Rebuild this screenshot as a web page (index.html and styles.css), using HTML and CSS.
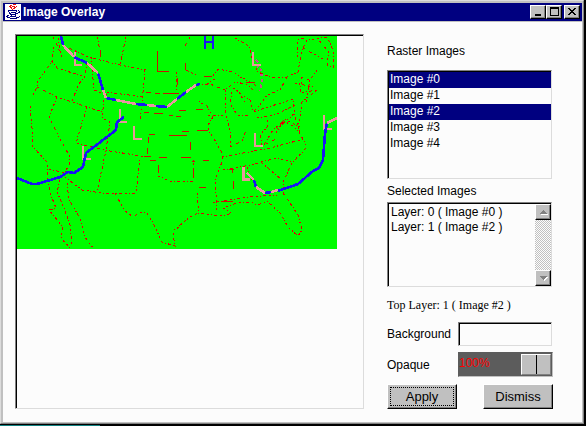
FILE: index.html
```html
<!DOCTYPE html>
<html lang="en">
<head>
<meta charset="utf-8">
<title>Image Overlay</title>
<link rel="stylesheet" href="styles.css">
</head>
<body>
<div class="window">
  <header class="titlebar">
    <svg class="logo" viewBox="0 0 16 16" shape-rendering="crispEdges" aria-hidden="true">
      <rect width="16" height="16" fill="#fff"/>
      <path d="M5 1.5h2M8 .5h3M4 2.5h2M7 2.5h3M11 2.5h1M5 3.5h2M9 3.5h2M6 4.5h1M8 4.5h2M7 5.5h1" stroke="#f01010"/>
      <path d="M3 6.5h9M13 6.5h1M3 7.5h1M11 7.5h1M14 7.5h1M4 8.5h1M6 8.5h5M13 8.5h2M4 9.5h2M10 9.5h3M5 10.5h6M2 11.5h2M6 11.5h1M10 11.5h1M1 12.5h2M5 12.5h6M14 12.5h1M2 13.5h3M11 13.5h3M5 14.5h7" stroke="#000080"/>
    </svg>
    <h1 class="title">Image Overlay</h1>
    <div class="controls">
      <button class="control" type="button" aria-label="Minimize"><svg viewBox="0 0 12 12" shape-rendering="crispEdges"><path d="M3 9h6" stroke="#000" stroke-width="2"/></svg></button>
      <button class="control" type="button" aria-label="Maximize"><svg viewBox="0 0 12 12" shape-rendering="crispEdges"><path d="M2 2h9M2.5 1v9M10.5 1v9M2 9.5h9" stroke="#000" fill="none"/><path d="M2 2h9" stroke="#000" stroke-width="2"/></svg></button>
      <button class="control control-close" type="button" aria-label="Close"><svg viewBox="0 0 12 12" shape-rendering="crispEdges"><path d="M2 2.5h2M8 2.5h2M3 3.5h2M7 3.5h2M4 4.5h4M5 5.5h2M4 6.5h4M3 7.5h2M7 7.5h2M2 8.5h2M8 8.5h2" stroke="#000"/></svg></button>
    </div>
  </header>
  <main class="content">
    <section class="canvas" aria-label="Overlay preview">
      <svg class="map" viewBox="17 36 320 213" shape-rendering="crispEdges" role="img" aria-label="Weather map">
        <rect x="17" y="36" width="320" height="213" fill="#00fc00"/>
        <g class="borders">
          <path d="M53 37L57 45L62 57M58 38L61 55M54 47L52 61L38 81L37 87L33 95"/>
          <path d="M30 106L31 117L32 128L33 147L47 162L47 180"/>
          <path d="M63 45L88 57L120 65L146 70"/>
          <path d="M52 61L57 68L82 76M87 63L84 78L78 85L72 102"/>
          <path d="M37 87L57 97L87 107L103 112M57 97L49 117L60 139L69 155L70 163L65 172"/>
          <path d="M87 107L76 143L104 150L147 157"/>
          <path d="M91 57L94 90L107 95M107 92L143 97M104 100L102 118L110 122L106 150L97 192"/>
          <path d="M145 70L143 92L140 120M97 37L100 50M126 37L120 65M176 72L177 90"/>
          <path d="M49 169L65 173M48 180L50 193L56 208L49 210L63 227L61 238L70 248"/>
          <path d="M60 180L57 192L64 208L70 225L72 245L75 248M67 183L69 200L80 218L85 237L93 248"/>
          <path d="M65 177L82 190L102 193L136 193L140 158M115 193L124 210L133 217L140 212L147 213L153 223L162 242L175 246L173 233L180 226"/>
          <path d="M158 176L170 181L193 181L193 160M197 193L199 212"/>
          <path d="M174 230L190 217L198 213L222 216L232 213L223 208L237 203L250 202L258 205L267 201L280 213L288 227L298 236L302 230L298 215L290 203L283 193L283 182L292 163L307 147L298 130"/>
          <path d="M217 210L215 180L222 162L223 155L216 142L208 130L208 125L213 117L207 106L198 101"/>
          <path d="M223 170L250 165L277 158L293 162M222 157L270 148L300 140M247 167L252 180M262 163L282 180M217 202L250 197L277 195"/>
          <path d="M190 37L184 48M185 63L186 70L198 76M213 76L218 69L233 72L242 78"/>
          <path d="M198 85L210 84L225 90L235 82L246 84L253 90M225 90L225 113L230 130L230 147"/>
          <path d="M232 92L230 103L237 115L250 115M233 88L250 100L253 110M237 90L245 102M223 115L208 116"/>
          <path d="M235 38L249 46L253 62L258 72L270 77L287 77L298 72L302 50L307 40L327 37L333 50L333 67L327 65L329 52L317 38M303 48L323 59"/>
          <path d="M317 70L310 80L302 77L300 93L317 90L302 102L298 130M297 57L298 40L307 37M295 83L313 87M310 80L306 102"/>
          <path d="M287 77L280 90L267 95L260 105L253 112L293 99L295 117L300 133L293 126L284 121L273 130L264 145L278 138"/>
          <path d="M257 118L277 114L295 105M262 145L260 135L268 126L267 119M277 129L296 112M276 133L284 119L300 127"/>
          <path d="M230 147L242 141L246 130M207 84L218 77M243 78L258 87"/>
        </g>
        <g class="state-lines">
          <path d="M157.5 51V71.5H169M100.5 50V57M146 92.5H151M155 93.5H160M163 93.5H170M144 112.5H149M154 113.5H163M169 115.5H173M176 116.5H181M149 134.5H155M148.5 137V143M147.5 148V154M144 156.5H151M150 160.5H156M159 157.5H167M158.5 165V173M169 135.5H187M170 93.5H179M177.5 78V85M179 110.5H186M196 109.5H203M197 130.5H208M182 131.5H189M190.5 142V150M181 157.5H191M203 160.5H209M199 187.5H206M232.5 169V173M229 169.5H234M233.5 181V189M246 82.5H255M204 76.5H212M185.5 63V70M192 161.5H195M193.5 168V177M213 202.5H215M222 201.5H233"/>
        </g>
        <path d="M256 60L259 63L258 67L261 68L260 74L263 76L260 91" class="shade"/>
        <g class="pressure-low">
          <path d="M75 52V65H82M120 109V122H127M134 126V139H142M83 146V158.500H91M253 52V65H261M255 133V146H263M324 115V129H332"/>
          <path d="M243.5 167V179.5H250" stroke-width="3"/>
        </g>
        <path d="M205 36V49M213 36V49M205 42H213" class="pressure-high"/>
        <g class="front-cold">
          <path d="M61 36L63 45M74 57L87 63M98 73L103 90M106 98L116 100M136 104L147 105M156 106L167 107M177 99L186 92M196 85L200 84"/>
          <path d="M17 178L32 184H37L60 177L68 172L74 173L83 167L86 153L116 130L117 122L124 117"/>
          <path d="M327 123L325 134L323 160L319 168L313 171L298 184L278 191M271 192L265 193M256 187L254 180"/>
        </g>
        <g class="front-warm">
          <path d="M63 45L74 57M87 63L98 73M103 90L106 98M116 100L136 104M147 105L156 106M167 107L177 99M186 92L196 85"/>
          <path d="M337 118L327 123M278 190L271 192M265 193L256 187M254 180L247 173"/>
        </g>
      </svg>
    </section>
    <form class="panel">
      <label class="label" for="raster">Raster Images</label>
      <select class="sunken raster" id="raster" size="6" multiple>
        <option selected>Image #0</option>
        <option>Image #1</option>
        <option selected>Image #2</option>
        <option>Image #3</option>
        <option>Image #4</option>
      </select>
      <label class="label" for="selected">Selected Images</label>
      <div class="sunken layers">
        <textarea class="layers-text" id="selected" readonly>Layer: 0 ( Image #0 )
Layer: 1 ( Image #2 )</textarea>
        <div class="scrollbar">
          <button class="scroll-button" type="button" aria-label="Scroll up"><svg viewBox="0 0 12 12" shape-rendering="crispEdges"><path d="M3 9h8L7 5z" fill="#fff"/><path d="M2 8h8L6 4z" fill="#808080"/></svg></button>
          <button class="scroll-button" type="button" aria-label="Scroll down"><svg viewBox="0 0 12 12" shape-rendering="crispEdges"><path d="M3 5h8L7 9z" fill="#fff"/><path d="M2 4h8L6 8z" fill="#808080"/></svg></button>
        </div>
      </div>
      <p class="top-layer">Top Layer: 1 ( Image #2 )</p>
      <div class="field">
        <label for="background">Background</label>
        <input class="sunken background" id="background" type="text">
      </div>
      <div class="field">
        <label for="opaque">Opaque</label>
        <div class="slider">
          <input class="range" id="opaque" type="range" min="0" max="100" value="100">
          <output class="percent" for="opaque">100%</output>
        </div>
      </div>
      <div class="actions">
        <button class="button button-default" type="button">Apply</button>
        <button class="button" type="button">Dismiss</button>
      </div>
    </form>
  </main>
</div>
</body>
</html>
```
FILE: styles.css
```css
* {
  box-sizing: border-box;
}

body {
  display: flex;
  min-height: 100vh;
  margin: 0;
  padding: 0 2px 2px 0;
  background: linear-gradient(#108080, #108080) left bottom / 100px 1px no-repeat #000;
  color: #000;
  font: 12px/16px "Liberation Sans", sans-serif;
}

button,
input,
select,
textarea {
  margin: 0;
  border-radius: 0;
  color: inherit;
  font: inherit;
}

.window {
  display: flex;
  flex: 1;
  flex-direction: column;
  padding: 1px;
  border: 1px solid;
  border-color: #dcdcdc #808080 #808080 #dcdcdc;
  background: #fcfcfc;
  box-shadow: inset -1px -1px #c0c0c0, inset 2px 2px #c0c0c0;
}

.titlebar {
  display: flex;
  align-items: center;
  height: 19px;
  margin: 1px 0 0 1px;
  padding: 0 2px;
  border-bottom: 1px solid #c0c0c0;
  background: #000080;
  color: #fff;
}

.logo {
  width: 16px;
  height: 16px;
}

.title {
  flex: 1;
  margin: 0 0 0 2px;
  font-size: 12px;
  line-height: 16px;
}

.controls {
  display: flex;
}

.control,
.scroll-button,
.button {
  border: 1px solid;
  border-color: #fff #000 #000 #fff;
  background: #c0c0c0;
  box-shadow: inset -1px -1px #808080;
}

.control {
  width: 16px;
  height: 14px;
  padding: 0 1px;
}

.control-close {
  margin-left: 2px;
}

.control svg,
.scroll-button svg {
  display: block;
  width: 12px;
  height: 12px;
}

.content {
  display: flex;
  flex: 1;
  gap: 23px;
  padding: 12px 29px 13px 13px;
}

.sunken,
.canvas {
  border: 1px solid;
  border-color: #808080 #dcdcdc #dcdcdc #808080;
  outline: 0;
  background: #fcfcfc;
  box-shadow: inset 1px 1px #000;
}

.canvas {
  flex: 1;
  min-width: 0;
  padding: 1px 0 0 1px;
}

.map {
  display: block;
  width: 320px;
  max-width: 100%;
}

.map path {
  fill: none;
}

.borders {
  stroke: #e00000;
  stroke-dasharray: 2 2 1 2 3 3;
}

.state-lines {
  stroke: #c81400;
}

.shade {
  stroke: #c0508c;
  stroke-width: 2;
  stroke-dasharray: 3 3;
}

.pressure-low {
  stroke: #e89898;
  stroke-width: 2;
}

.pressure-high {
  stroke: #1818f0;
  stroke-width: 2;
}

.front-cold {
  stroke: #1818f0;
  stroke-width: 2.6;
}

.front-warm {
  stroke: #e898a0;
  stroke-width: 2.6;
}

.panel {
  display: flex;
  flex-direction: column;
  width: 166px;
  padding-top: 9px;
}

.raster {
  height: 109px;
  margin: 11px 1px 4px 0;
  padding: 1px 0 0 1px;
  overflow: hidden;
}

.raster option {
  min-height: 16px;
  padding: 0 1px;
  line-height: 16px;
}

.raster option:checked {
  background: linear-gradient(#000080, #000080);
  color: #fff;
  -webkit-text-fill-color: #fff;
}

.layers {
  display: flex;
  height: 85px;
  margin: 3px 1px 10px 0;
  padding: 1px 0 0 1px;
}

.layers-text {
  flex: 1;
  min-width: 0;
  padding: 1px 2px;
  border: 0;
  outline: 0;
  overflow: hidden;
  background: transparent;
  line-height: 15px;
  resize: none;
}

.scrollbar {
  display: flex;
  flex-direction: column;
  justify-content: space-between;
  width: 16px;
  background: repeating-conic-gradient(#c0c0c0 0 25%, #fcfcfc 0 50%) 0 0 / 2px 2px;
}

.scroll-button {
  width: 16px;
  height: 16px;
  padding: 1px;
}

.top-layer {
  margin: 0 0 9px;
  font-family: "Liberation Serif", serif;
}

.field {
  display: flex;
  align-items: center;
  justify-content: space-between;
  margin-bottom: 6px;
}

.background {
  width: 94px;
  height: 24px;
  margin-right: 1px;
  padding: 2px 4px;
}

.slider {
  position: relative;
  width: 95px;
}

.range {
  display: block;
  width: 100%;
  height: 25px;
  padding: 1px;
  border: 1px solid;
  border-color: #5c5c5c #c0c0c0 #c0c0c0 #5c5c5c;
  background: #5c5c5c;
  appearance: none;
}

.range::-webkit-slider-thumb {
  width: 30px;
  height: 21px;
  border: 1px solid;
  border-color: #fff #808080 #808080 #fff;
  background: linear-gradient(#000, #000) center / 1px 100% no-repeat #c0c0c0;
  appearance: none;
}

.percent {
  position: absolute;
  top: 3px;
  left: 1px;
  color: #fc0000;
  pointer-events: none;
}

.actions {
  display: flex;
  justify-content: space-between;
  margin-top: 1px;
}

.button {
  width: 70px;
  height: 25px;
  padding: 0;
  font-size: 13px;
}

.button-default {
  outline: 1px dotted #000;
  outline-offset: -4px;
}
```
